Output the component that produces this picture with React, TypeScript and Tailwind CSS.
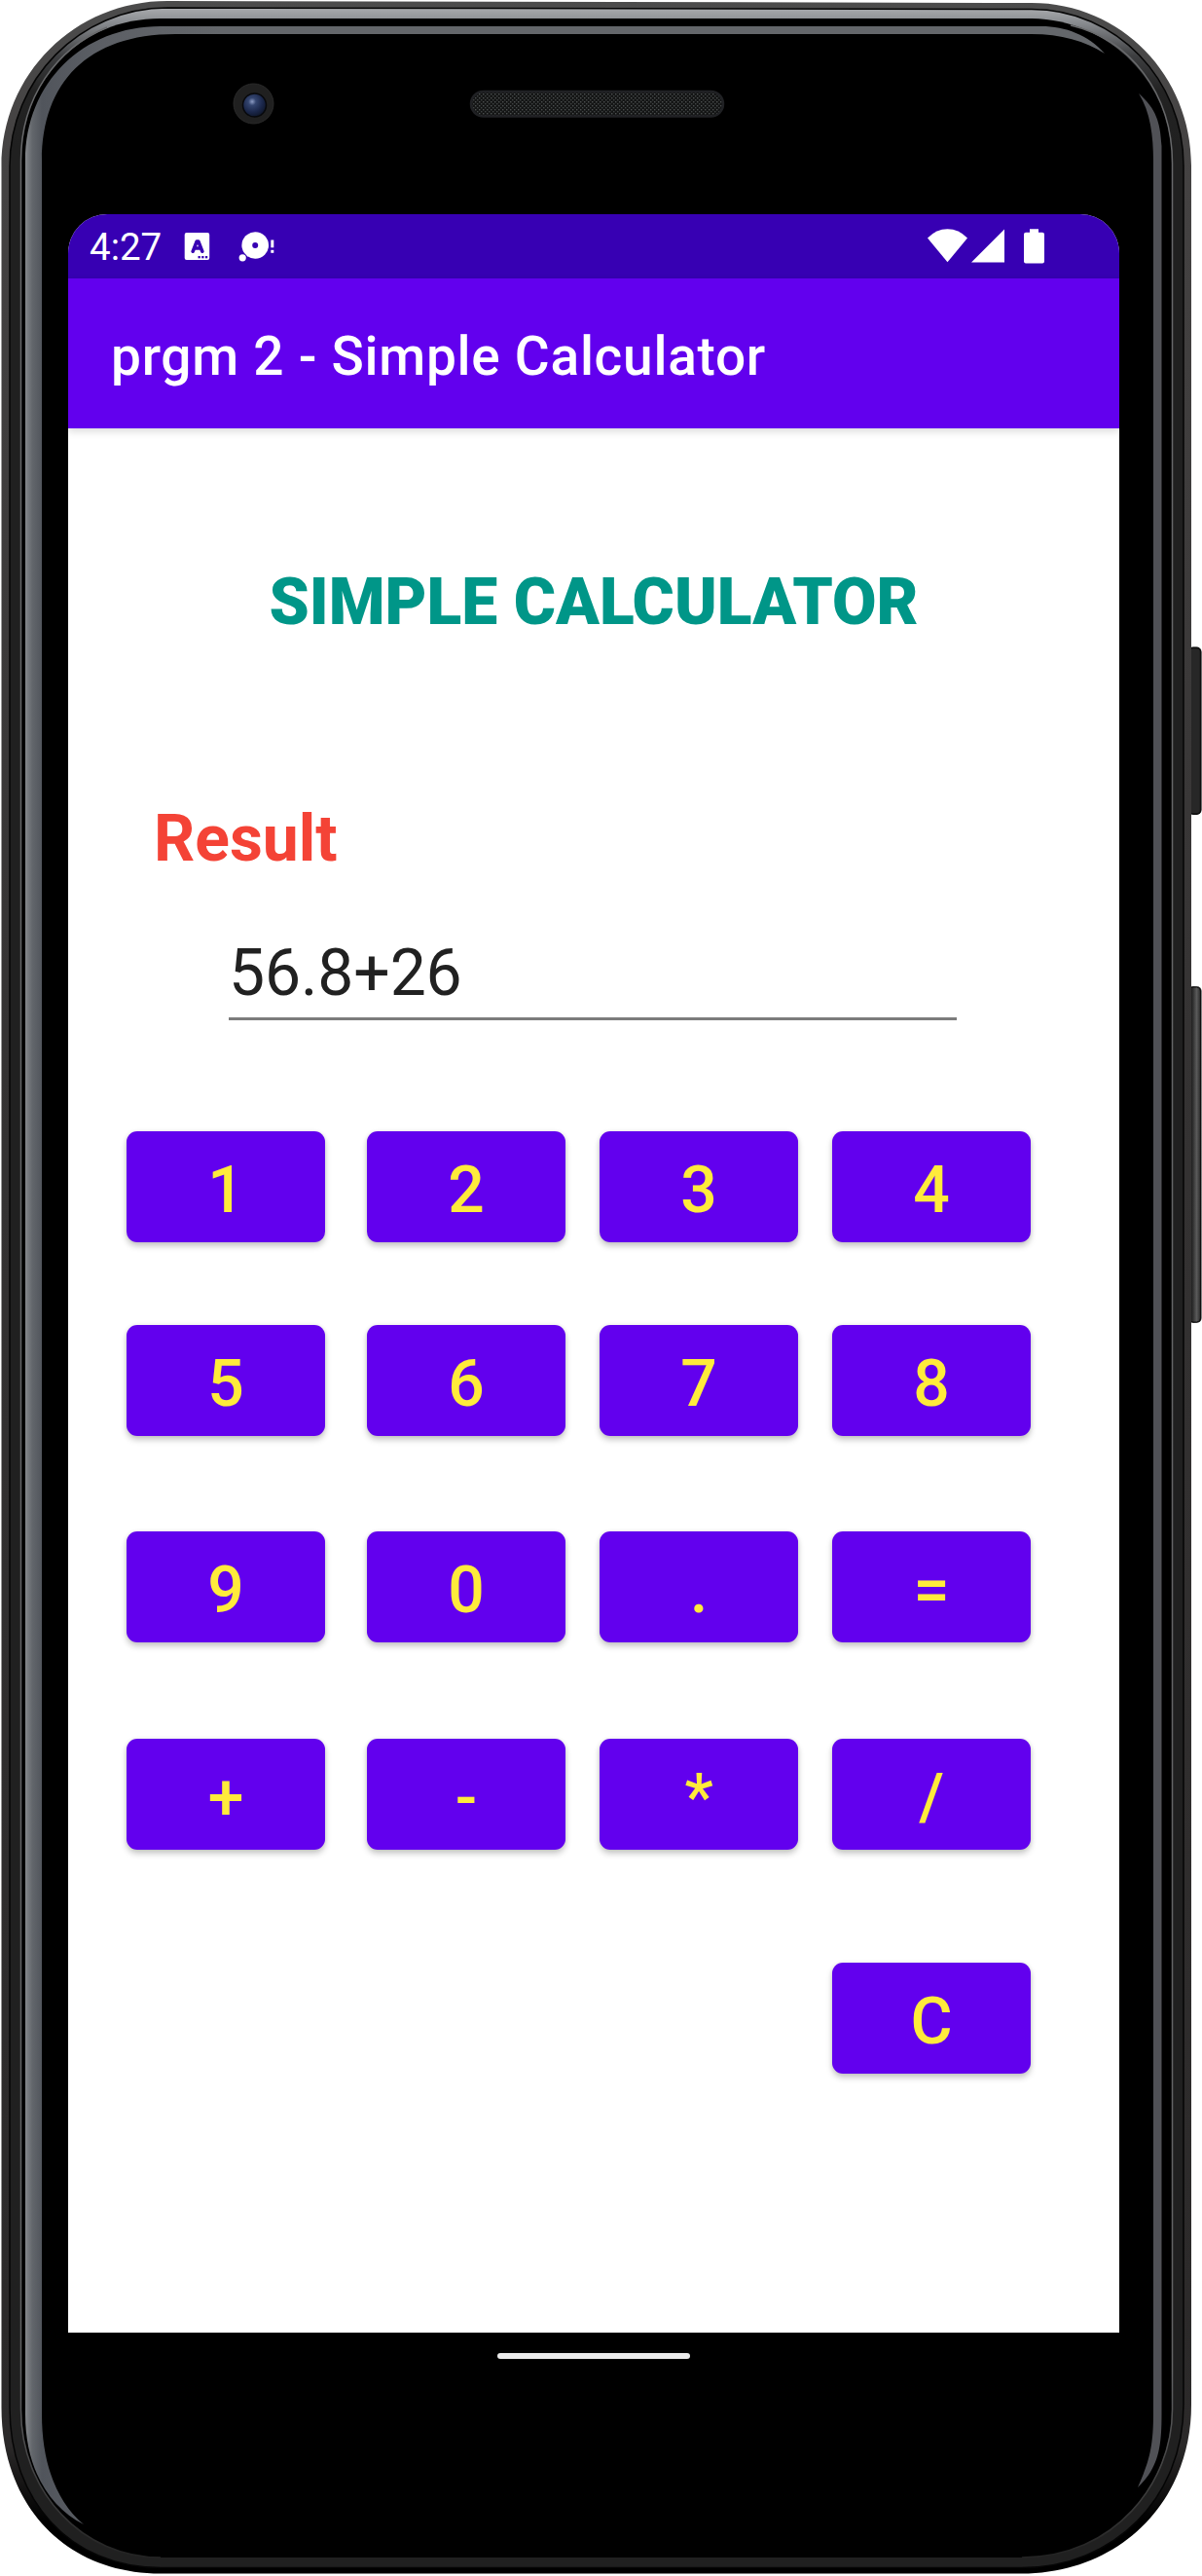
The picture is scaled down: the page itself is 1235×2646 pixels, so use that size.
import React from "react";

const keyRows: { mt: string; keys: string[] }[] = [
  { mt: "mt-0", keys: ["1", "2", "3", "4"] },
  { mt: "mt-[85px]", keys: ["5", "6", "7", "8"] },
  { mt: "mt-[98px]", keys: ["9", "0", ".", "="] },
  { mt: "mt-[99px]", keys: ["+", "-", "*", "/"] },
];

function Key({ label }: { label: string }) {
  return (
    <button className="flex h-[114px] w-[204px] items-center justify-center rounded-[11px] bg-[#6200ee] pt-[8px] pl-[6px] text-[66px] leading-none font-medium tracking-[0.0892em] text-[#ffeb3b] shadow-[0_4px_6px_rgba(0,0,0,0.22),0_0_4px_rgba(0,0,0,0.08)]">
      {label}
    </button>
  );
}

/* Phone body: rim, highlights, side keys, camera and earpiece. */
function Device() {
  return (
    <svg className="absolute inset-0 h-[2646px] w-[1235px]" viewBox="0 0 1235 2646" fill="none">
      <defs>
        <linearGradient id="rim" x1="0" y1="0" x2="0" y2="1">
          <stop offset="0" stopColor="#4c4c4c" />
          <stop offset="0.05" stopColor="#454343" />
          <stop offset="0.4" stopColor="#353333" />
          <stop offset="0.95" stopColor="#2b2929" />
          <stop offset="0.98" stopColor="#000" />
        </linearGradient>
        <linearGradient id="band" x1="0" y1="8" x2="0" y2="150" gradientUnits="userSpaceOnUse">
          <stop offset="0" stopColor="#a9abae" />
          <stop offset="0.12" stopColor="#85888c" />
          <stop offset="0.35" stopColor="#3d3e40" />
          <stop offset="0.6" stopColor="#232323" />
          <stop offset="1" stopColor="#202020" />
        </linearGradient>
        <linearGradient id="seam" x1="0" y1="0" x2="0" y2="2646" gradientUnits="userSpaceOnUse">
          <stop offset="0" stopColor="#68696b" />
          <stop offset="0.92" stopColor="#626365" />
          <stop offset="0.97" stopColor="#3a3a3a" />
          <stop offset="1" stopColor="#1c1c1c" />
        </linearGradient>
        <linearGradient id="glass" x1="26" y1="0" x2="226" y2="0" gradientUnits="userSpaceOnUse">
          <stop offset="0" stopColor="#85888c" />
          <stop offset="0.035" stopColor="#63676c" />
          <stop offset="0.085" stopColor="#51555c" />
          <stop offset="0.4" stopColor="#5c5f65" />
          <stop offset="1" stopColor="#64676b" />
        </linearGradient>
        <linearGradient id="sideKey" x1="1221" y1="0" x2="1235" y2="0" gradientUnits="userSpaceOnUse">
          <stop offset="0" stopColor="#0a0a0a" />
          <stop offset="0.3" stopColor="#2a2a2a" />
          <stop offset="0.6" stopColor="#5a5a5a" />
          <stop offset="0.8" stopColor="#3a3a3a" />
          <stop offset="1" stopColor="#080808" />
        </linearGradient>
        <radialGradient id="lens" cx="0.4" cy="0.35" r="0.65">
          <stop offset="0" stopColor="#8d9cc4" />
          <stop offset="0.25" stopColor="#34456f" />
          <stop offset="0.7" stopColor="#1a2649" />
          <stop offset="1" stopColor="#10182c" />
        </radialGradient>
        <pattern id="mesh" width="4" height="4" patternUnits="userSpaceOnUse">
          <rect width="4" height="4" fill="#141515" />
          <rect width="1.4" height="1.4" fill="#4c5050" />
          <rect x="2" y="2" width="1.4" height="1.4" fill="#404444" />
        </pattern>
      </defs>

      <rect x="1221" y="664.5" width="13.5" height="172.5" rx="5" fill="#272727" />
      <rect x="1222" y="665.5" width="11.5" height="170.5" rx="4" stroke="#0e0e0e" strokeWidth="1.5" />
      <rect x="1221" y="1013" width="13.5" height="346" rx="5" fill="url(#sideKey)" />
      <rect x="1222" y="1014" width="11.5" height="344" rx="4" stroke="#0e0e0e" strokeWidth="1" />

      {/* outer rim */}
      <path d="M172 1L1060 3C1152 3 1224 78 1224 170V2470C1224 2570 1150 2643.500 1050 2643.500H165C67 2643.500 1.500 2573 1.500 2473V171C1.500 76 77 1 172 1Z" fill="url(#rim)" />
      {/* polished band */}
      <path d="M172 8L1060 9.500C1147 9.500 1216 82 1216 170V2470C1216 2565 1145 2637.500 1050 2637.500H165C71 2637.500 10 2567 10 2473V171C10 82 82 8 172 8Z" fill="url(#band)" stroke="#050505" strokeWidth="1.5" />
      {/* glass seam */}
      <path d="M165 19H1060C1140 20 1204 85 1204 165V2475C1204 2550 1145 2627 1050 2627H165C85 2627 22 2560 22 2475V165C22 82 82 19 165 19Z" fill="#000" />
      <path d="M1100 26C1160 40 1204.500 95 1204.500 168V2475C1204.500 2550 1145 2627 1050 2627M165 2627C85 2627 21.500 2560 21.500 2475V165C21.500 100 58 50 110 28" stroke="url(#seam)" strokeWidth="1.500" />

      {/* glass edge highlights */}
      <path d="M1070 27H165C85 27 26 85 26 165V2480C26 2535 50 2575 86 2593C58 2570 43 2530 43 2480V165C43 85 90 35 180 35H1060C1090 35 1115 42 1135 55C1118 36 1095 27 1070 27Z" fill="url(#glass)" />
      <path d="M1170 96C1182 115 1185 140 1185 165V2480C1185 2515 1180 2530 1169 2555C1190 2535 1193.500 2515 1193.500 2480V150C1192 125 1188 112 1170 96Z" fill="#505156" />

      {/* front camera */}
      <circle cx="260.500" cy="106.500" r="20.500" fill="#202020" stroke="#2a2a2a" />
      <circle cx="261.500" cy="108" r="12" fill="url(#lens)" stroke="#08090c" strokeWidth="1.500" />
      {/* earpiece */}
      <rect x="484" y="94" width="259" height="25.500" rx="12.750" fill="url(#mesh)" stroke="#202124" strokeWidth="2.500" />
    </svg>
  );
}

function NotificationIcons() {
  return (
    <svg className="ml-[23px] h-[32px] w-[94px]" viewBox="0 0 94 32" fill="#fff">
      <rect x="0.700" y="2" width="25.500" height="28" rx="2" />
      <path d="M9.200 21.200 13.200 11H14.800L18.800 21.200M11 18H17" fill="none" stroke="#3700b3" strokeWidth="3.600" strokeLinecap="round" strokeLinejoin="round" />
      <rect x="14.500" y="26" width="2.300" height="2.300" fill="#3700b3" />
      <rect x="18.200" y="26" width="2.300" height="2.300" fill="#3700b3" />
      <rect x="21.900" y="26" width="2.300" height="2.300" fill="#3700b3" />
      <circle cx="73.200" cy="15" r="13.800" />
      <circle cx="73.200" cy="15" r="3" fill="#3700b3" />
      <circle cx="60.200" cy="27.800" r="4.500" fill="#3700b3" />
      <circle cx="60.200" cy="27.800" r="3.600" />
      <rect x="89.300" y="9.500" width="3" height="7.800" />
      <rect x="89.300" y="19.800" width="3" height="3" />
    </svg>
  );
}

function SystemIcons() {
  return (
    <svg className="h-[36px] w-[121px]" viewBox="0 0 121 36" fill="#fff">
      <path d="M0 9.500Q9 .3 20.500 .3T41 9.500L20.500 34.300Z" />
      <path d="M45 34.500 79 .5V34.500Z" />
      <path d="M105 .3H114V3.800H118Q120 3.800 120 5.800V33.500Q120 35.500 118 35.500H101Q99 35.500 99 33.500V5.800Q99 3.800 101 3.800H105Z" />
    </svg>
  );
}

export default function App() {
  return (
    <div className="relative h-[2646px] w-[1235px] overflow-hidden bg-white font-['Roboto',sans-serif]">
      <Device />
      <div className="relative px-[70px] pt-[220px]">
        <main className="flex h-[2176px] w-[1080px] flex-col overflow-hidden rounded-t-[40px] bg-white">
          <header className="flex h-[66px] shrink-0 items-center bg-[#3700b3] pl-[22px] text-white">
            <span className="mt-[3px] text-[38.500px] leading-none">4:27</span>
            <NotificationIcons />
            <div className="mr-[76px] ml-auto">
              <SystemIcons />
            </div>
          </header>
          <div className="flex h-[154px] shrink-0 items-center bg-[#6200ee] pl-[44px] text-[55px] font-medium tracking-[0.73px] text-white shadow-[0_3px_8px_rgba(0,0,0,0.15)]">
            <h1 className="mt-[6px] leading-none">prgm 2 - Simple Calculator</h1>
          </div>
          <h2 className="mt-[146px] text-center text-[66px] leading-[66px] font-black text-[#009688]">SIMPLE CALCULATOR</h2>
          <h3 className="mt-[177px] ml-[88px] text-[66px] leading-[66px] font-bold text-[#f44336]">Result</h3>
          <div className="mt-[66px] ml-[165px] h-[87px] w-[748px] shrink-0 border-b-[3px] border-[#7c7c7c] text-[66px] leading-[78px] tracking-[-0.1px] text-[#212121]">56.8+26</div>
          <section className="mt-[114px] ml-[60px] w-[929px]">
            {keyRows.map((row) => (
              <div key={row.keys[0]} className={`grid grid-cols-[247px_239px_239px_204px] ${row.mt}`}>
                {row.keys.map((k) => (
                  <Key key={k} label={k} />
                ))}
              </div>
            ))}
            <div className="mt-[116px] flex justify-end">
              <Key label="C" />
            </div>
          </section>
        </main>
        <div className="mt-[21px] ml-[441px] h-[6px] w-[198px] rounded-full bg-[#ebebeb]" />
      </div>
    </div>
  );
}
